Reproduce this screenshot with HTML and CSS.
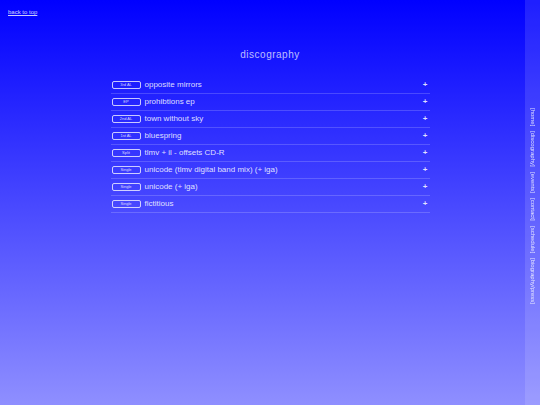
FILE: index.html
```html
<!DOCTYPE html>
<html lang="en">
<head>
<meta charset="utf-8">
<title>discography</title>
<link rel="stylesheet" href="styles.css">
</head>
<body>
<div class="page">
  <a class="top-link" href="#">back to top</a>
  <h1 class="heading">discography</h1>
  <ul class="releases">
    <li class="release"><span class="badge">3rd AL</span><span class="title">opposite mirrors</span><span class="plus">+</span></li>
    <li class="release"><span class="badge">EP</span><span class="title">prohibtions ep</span><span class="plus">+</span></li>
    <li class="release"><span class="badge">2nd AL</span><span class="title">town without sky</span><span class="plus">+</span></li>
    <li class="release"><span class="badge">1st AL</span><span class="title">bluespring</span><span class="plus">+</span></li>
    <li class="release"><span class="badge">Split</span><span class="title">tlmv + il - offsets CD-R</span><span class="plus">+</span></li>
    <li class="release"><span class="badge">Single</span><span class="title">unicode (tlmv digital band mix) (+ iga)</span><span class="plus">+</span></li>
    <li class="release"><span class="badge">Single</span><span class="title">unicode (+ iga)</span><span class="plus">+</span></li>
    <li class="release"><span class="badge">Single</span><span class="title">fictitious</span><span class="plus">+</span></li>
  </ul>
</div>
<nav class="sidebar">
  <a class="nav-item" href="#">[home]</a>
  <a class="nav-item" href="#">[discography]</a>
  <a class="nav-item" href="#">[events]</a>
  <a class="nav-item" href="#">[contact]</a>
  <a class="nav-item" href="#">[schedule]</a>
  <a class="nav-item" href="#">[biography/press]</a>
</nav>
</body>
</html>
```
FILE: styles.css
```css
html, body {
  margin: 0;
  padding: 0;
}
body {
  min-height: 405px;
  background: linear-gradient(to bottom, #0000ff 0%, #8f8fff 100%);
  font-family: "Liberation Sans", Arial, sans-serif;
  color: rgba(255, 255, 255, 0.85);
}
.page {
  min-height: 405px;
  box-sizing: border-box;
  padding: 9px 8px 0 8px;
  display: flex;
  flex-direction: column;
}
.top-link {
  align-self: flex-start;
  font-size: 6px;
  line-height: 7px;
  color: rgba(255, 255, 255, 0.8);
  text-decoration: underline;
}
.heading {
  margin: 33px 0 0 0;
  text-align: center;
  font-size: 10px;
  line-height: 12px;
  font-weight: normal;
  letter-spacing: 0.5px;
  color: rgba(255, 255, 255, 0.72);
}
.releases {
  list-style: none;
  margin: 16px auto 0 auto;
  padding: 0;
  width: 319px;
}
.release {
  display: flex;
  align-items: center;
  height: 16px;
  border-bottom: 1px solid rgba(255, 255, 255, 0.18);
  padding: 0 2px 0 1px;
}
.badge {
  box-sizing: border-box;
  width: 29px;
  height: 8px;
  border: 1px solid rgba(255, 255, 255, 0.75);
  border-radius: 2px;
  font-size: 4px;
  line-height: 6px;
  text-align: center;
  color: rgba(255, 255, 255, 0.8);
  flex: none;
}
.title {
  margin-left: 4px;
  font-size: 8px;
  line-height: 10px;
  flex: 1;
  color: rgba(255, 255, 255, 0.85);
}
.plus {
  font-size: 8px;
  font-weight: bold;
  line-height: 10px;
  color: rgba(255, 255, 255, 0.85);
}
.sidebar {
  position: fixed;
  top: 0;
  right: 0;
  bottom: 0;
  width: 15px;
  background: rgba(255, 255, 255, 0.12);
  display: flex;
  flex-direction: column;
  align-items: center;
  padding-top: 108px;
  box-sizing: border-box;
  gap: 5px;
}
.nav-item {
  writing-mode: vertical-rl;
  font-size: 6px;
  line-height: 7px;
  color: rgba(255, 255, 255, 0.8);
  text-decoration: none;
}
```
